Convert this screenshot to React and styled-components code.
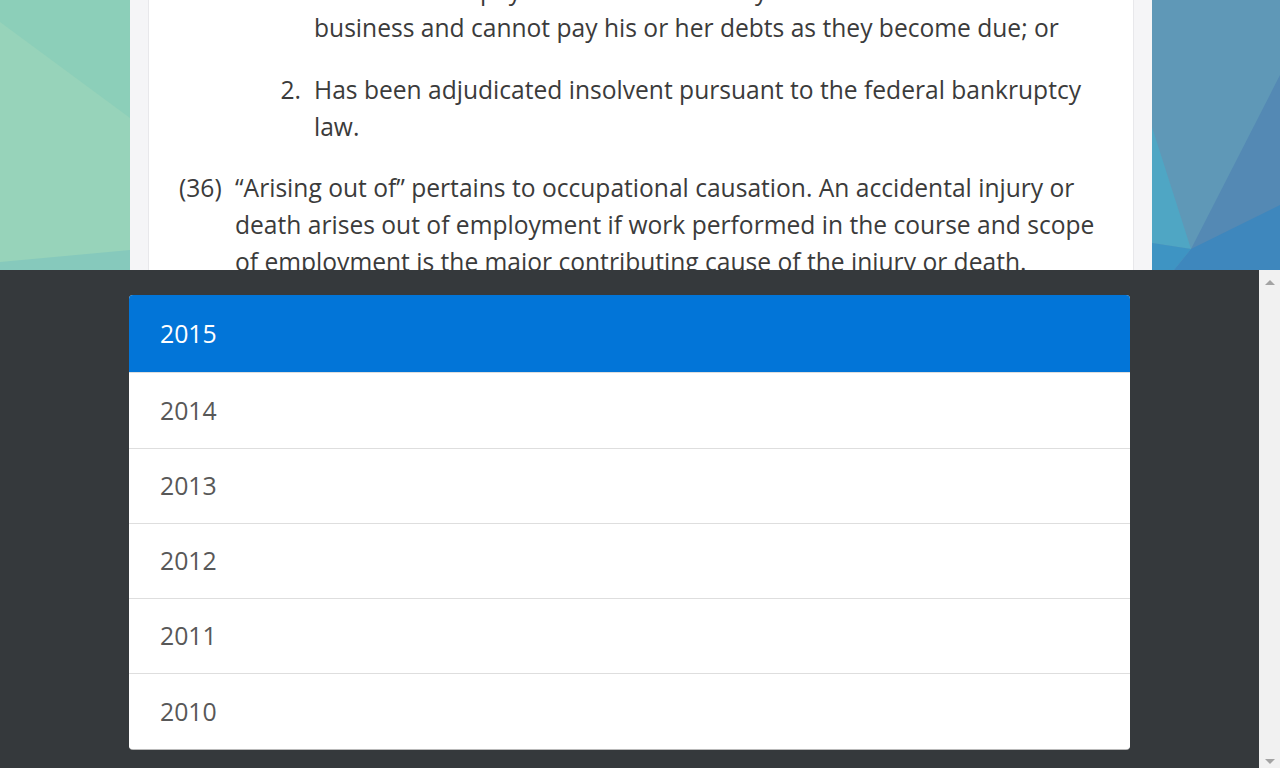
import React from "react";
import styled, { createGlobalStyle } from "styled-components";

const GlobalStyle = createGlobalStyle`
  html, body {
    margin: 0;
    padding: 0;
    height: 100%;
    overflow: hidden;
  }
  body {
    font-family: "Open Sans", "Liberation Sans", sans-serif;
  }
`;

const heroArt = `<svg xmlns='http://www.w3.org/2000/svg' viewBox='0 0 1280 270' preserveAspectRatio='none'>
<rect width='1280' height='270' fill='#97d3ba'/>
<polygon points='0,0 130,0 130,118 0,22' fill='#8ccfb9'/>
<polygon points='0,262 130,250 130,270 0,270' fill='#86c9bc'/>
<rect x='1140' width='140' height='270' fill='#5f98b7'/>
<polygon points='1280,75 1191,249 1280,250' fill='#5489b4'/>
<polygon points='1152,127 1191,249 1152,243' fill='#4fa6c4'/>
<polygon points='1152,243 1191,249 1174,270 1152,270' fill='#3e94c3'/>
<polygon points='1191,249 1280,205 1280,270 1174,270' fill='#3e87bd'/>
</svg>`;

const Page = styled.div`
  display: flex;
  flex-direction: column;
  height: 100vh;
`;

const Hero = styled.div`
  flex: none;
  height: 270px;
  overflow: hidden;
  padding-left: 130px;
  background: url("data:image/svg+xml,${encodeURIComponent(heroArt)}") no-repeat;
  background-size: 100% 100%;
`;

const Card = styled.div`
  width: 1022px;
  height: 100%;
  box-sizing: border-box;
  padding: 0 18px;
  background: #f5f5f7;
`;

const Paper = styled.div`
  height: 100%;
  box-sizing: border-box;
  background: #fff;
  border-left: 1px solid #e8e8eb;
  border-right: 1px solid #e8e8eb;
  padding: 0 30px;
  overflow: hidden;
  color: #3b3b3b;
  font-size: 24.6px;
  line-height: 37px;
`;

const Article = styled.div`
  margin-top: -28px;
  display: flex;
  flex-direction: column;
  gap: 24.6px;
`;

const Definition = styled.div`
  display: grid;
  grid-template-columns: 56px 1fr;
`;

const SubItem = styled.div`
  display: grid;
  grid-template-columns: 39px 1fr;
  margin-left: ${({ indent }) => indent}px;
`;

const Marker = styled.span`
  text-align: ${({ align }) => align || "left"};
  padding-right: ${({ align }) => (align === "right" ? "13px" : "0")};
  white-space: nowrap;
`;

const Sheet = styled.div`
  flex: 1;
  display: flex;
  min-height: 0;
`;

const SheetBody = styled.div`
  flex: 1;
  background: #35393c;
  padding: 25px 0 0 129px;
`;

const YearList = styled.ul`
  list-style: none;
  margin: 0;
  padding: 0;
  width: 1001px;
  background: #fff;
  border-radius: 4px;
  overflow: hidden;
  box-shadow: 0 1px 0 #b9b9b9;
`;

const YearRow = styled.li`
  display: flex;
  align-items: center;
  box-sizing: border-box;
  height: ${({ h }) => h}px;
  padding: 0 0 2px 31px;
  font-size: 24.8px;
  color: ${({ active }) => (active ? "#fff" : "#585858")};
  background: ${({ active }) => (active ? "#0275d8" : "#fff")};
  border-top: ${({ first }) => (first ? "none" : "1px solid #dedede")};
`;

const ScrollTrack = styled.div`
  width: 21px;
  background: #f1f1f1;
  display: flex;
  flex-direction: column;
  justify-content: space-between;
  align-items: center;
  padding: 10px 0 4px;
`;

const Arrow = styled.span`
  width: 0;
  height: 0;
  border-left: 5px solid transparent;
  border-right: 5px solid transparent;
  ${({ down }) =>
    down ? "border-top: 5px solid #a3a3a3;" : "border-bottom: 5px solid #a3a3a3;"}
`;

const years = [
  { year: 2015, h: 77 },
  { year: 2014, h: 76 },
  { year: 2013, h: 75 },
  { year: 2012, h: 75 },
  { year: 2011, h: 75 },
  { year: 2010, h: 76 },
];

export default function App() {
  return (
    <Page>
      <GlobalStyle />
      <Hero>
        <Card>
          <Paper>
            <Article>
              <SubItem indent={96}>
                <Marker align="right">1.</Marker>
                <span>
                  Has ceased to pay debts in the ordinary course of
                  <br />
                  business and cannot pay his or her debts as they become due; or
                </span>
              </SubItem>
              <SubItem indent={96}>
                <Marker align="right">2.</Marker>
                <span>
                  Has been adjudicated insolvent pursuant to the federal
                  bankruptcy law.
                </span>
              </SubItem>
              <Definition>
                <Marker>(36)</Marker>
                <span>
                  “Arising out of” pertains to occupational causation. An
                  accidental injury or death arises out of employment if work
                  performed in the course and scope of employment is the major
                  contributing cause of the injury or death.
                </span>
              </Definition>
            </Article>
          </Paper>
        </Card>
      </Hero>
      <Sheet>
        <SheetBody>
          <YearList>
            {years.map((y, i) => (
              <YearRow key={y.year} h={y.h} active={i === 0} first={i === 0}>
                {y.year}
              </YearRow>
            ))}
          </YearList>
        </SheetBody>
        <ScrollTrack>
          <Arrow />
          <Arrow down />
        </ScrollTrack>
      </Sheet>
    </Page>
  );
}
